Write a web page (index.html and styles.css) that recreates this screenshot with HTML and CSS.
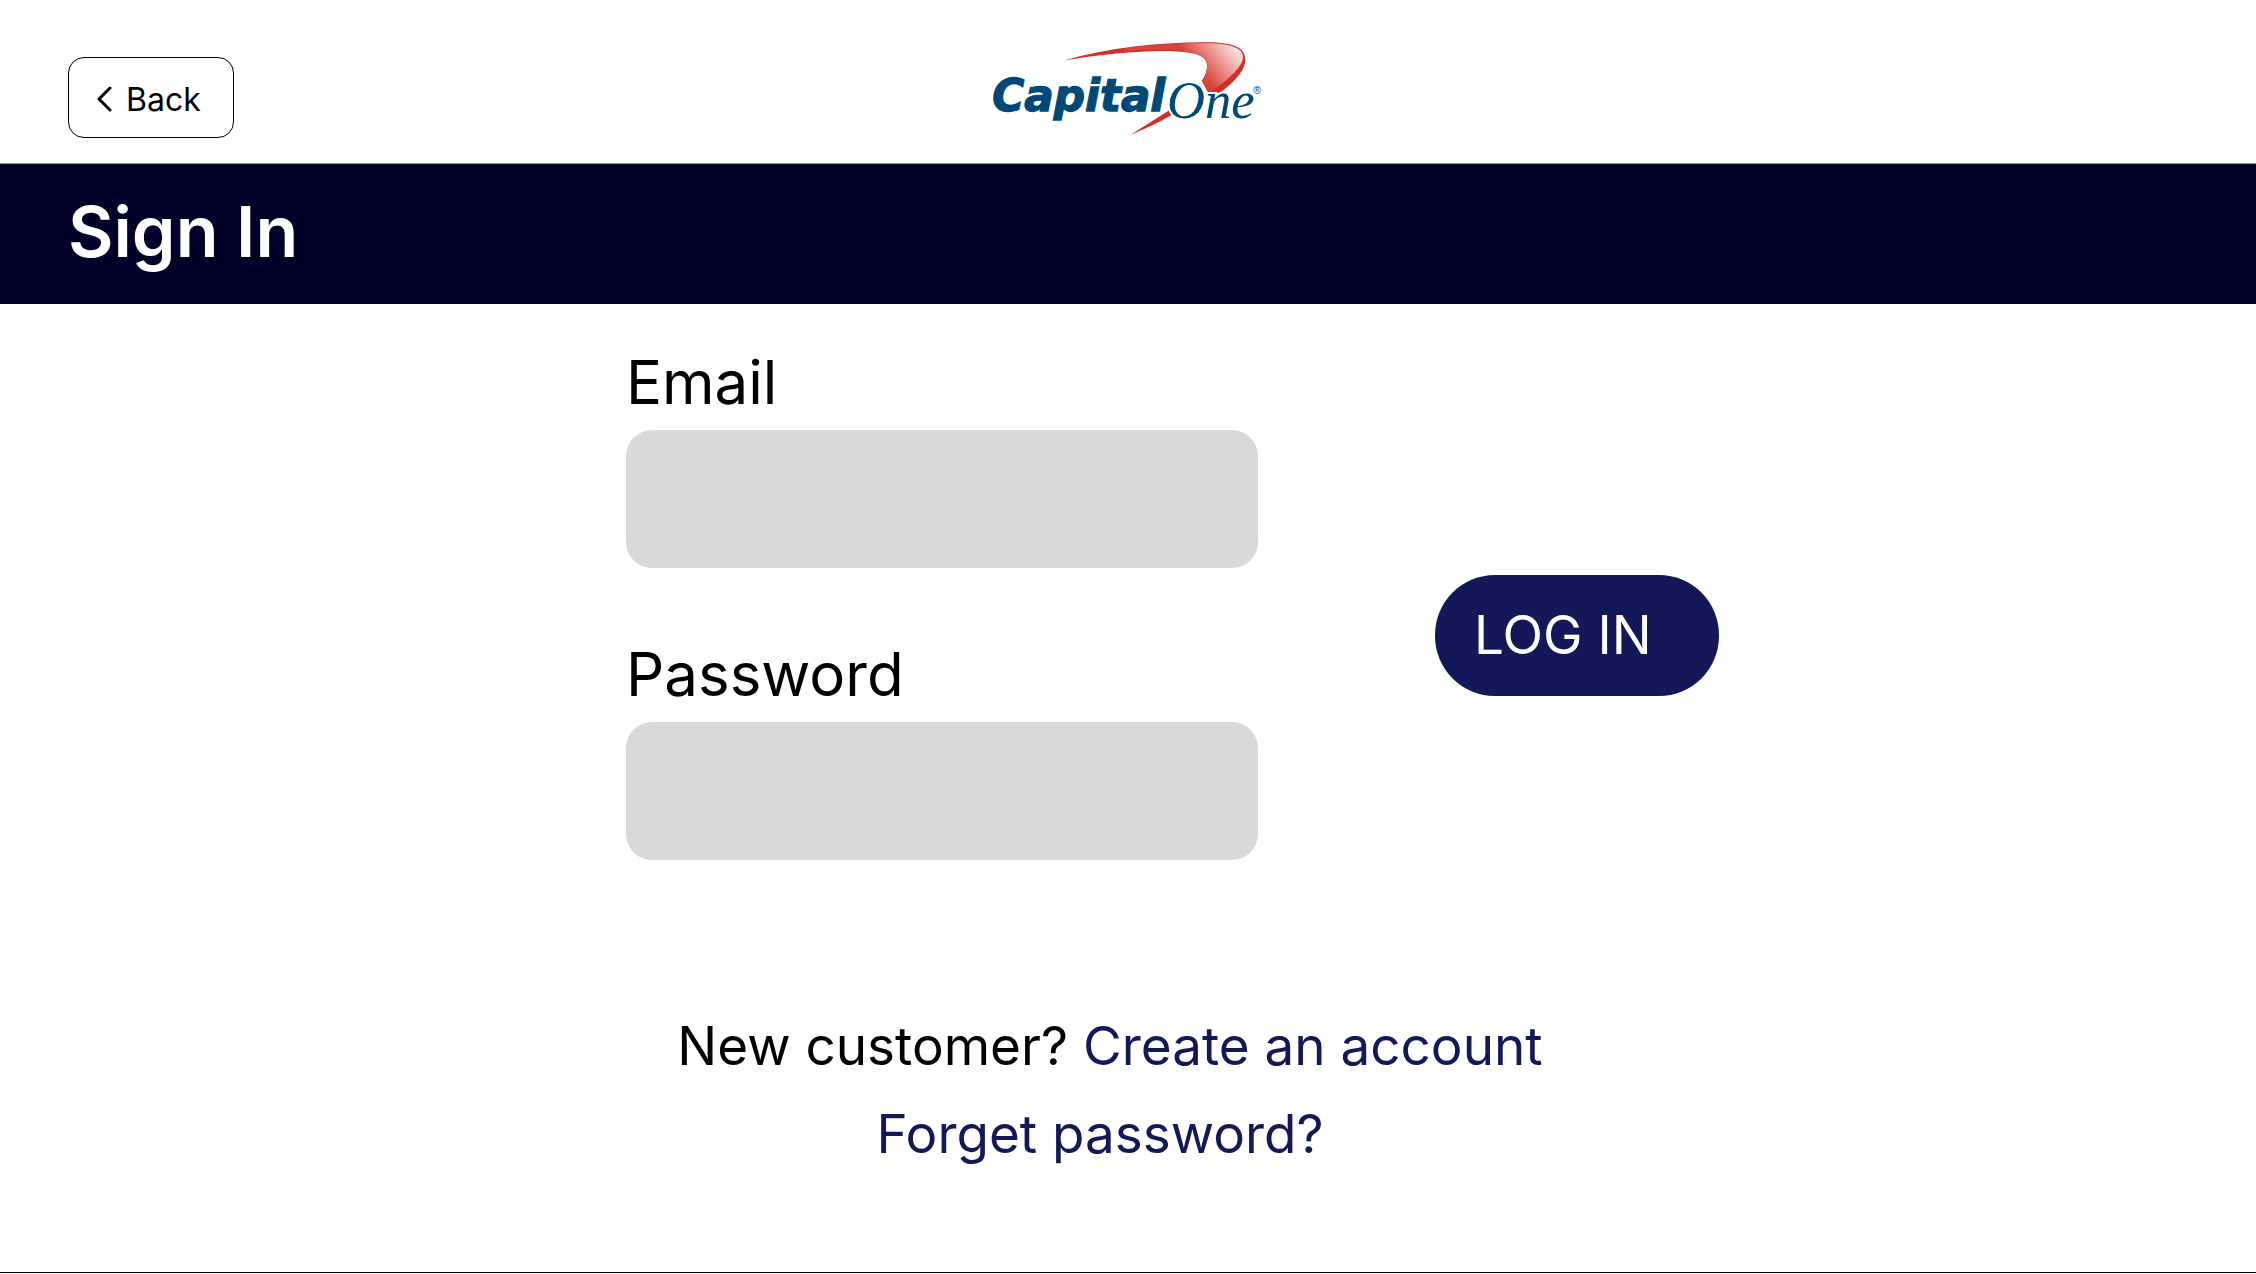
FILE: index.html
```html
<!DOCTYPE html>
<html lang="en">
<head>
<meta charset="utf-8">
<meta name="viewport" content="width=device-width, initial-scale=1">
<title>Sign In</title>
<link rel="stylesheet" href="styles.css">
</head>
<body>
<header class="topbar">
  <button class="back" type="button">
    <svg class="back-icon" viewBox="0 0 16 28" aria-hidden="true"><path d="M14 3 3 14l11 11"/></svg>
    Back
  </button>
  <svg class="logo" viewBox="38 33 810 285" role="img" aria-label="Capital One">
    <defs>
      <linearGradient id="swoosh" gradientUnits="userSpaceOnUse" x1="670" y1="140" x2="775" y2="55">
        <stop offset="0" stop-color="#d8433b"/>
        <stop offset="1" stop-color="#fbeae8"/>
      </linearGradient>
    </defs>
    <path class="logo-red" d="M249 92C380 54 540 36 680 37C762 38 797 54 795 92C792 130 748 168 708 196L684 188L664 152C682 130 685 100 672 86C640 50 440 60 249 92Z"/>
    <path fill="url(#swoosh)" d="M430 56C540 41 620 38 690 40C765 43 795 60 787 90C775 125 730 158 690 186L664 152C684 128 686 98 672 84C640 54 500 58 430 63Z"/>
    <path class="logo-red" d="M450 315L568 240L573 256C535 278 495 296 450 315Z"/>
    <text class="logo-capital" x="36" y="243">Capital</text>
    <text class="logo-one" x="560" y="265">One</text>
    <text class="logo-mark" x="819" y="193">®</text>
  </svg>
</header>
<div class="titlebar"><h1 class="title">Sign In</h1></div>
<main class="content">
  <form class="login">
    <div class="fields">
      <div class="field">
        <label class="label" for="email">Email</label>
        <input class="input" id="email" type="email">
      </div>
      <div class="field">
        <label class="label" for="password">Password</label>
        <input class="input" id="password" type="password">
      </div>
    </div>
    <button class="submit" type="submit">LOG IN</button>
  </form>
  <div class="links">
    <p class="line">New customer? <a class="link" href="#create">Create an account</a></p>
    <p class="line line-forgot"><a class="link" href="#forgot">Forget password?</a></p>
  </div>
</main>
<footer class="bottom"></footer>
</body>
</html>
```
FILE: styles.css
```css
* { box-sizing: border-box; }

body {
  margin: 0;
  min-height: 100vh;
  display: flex;
  flex-direction: column;
  background: #fff;
  color: #000;
  font-family: Inter, "Liberation Sans", sans-serif;
}

.topbar {
  display: grid;
  grid-template-columns: 1fr 270px 1fr;
  align-items: start;
  padding: 41px 68px 25px;
  border-bottom: 1px solid #999;
}

.back {
  display: flex;
  align-items: center;
  gap: 14px;
  width: 166px;
  height: 81px;
  margin-top: 16px;
  padding: 3px 0 0 27px;
  border: 1px solid #000;
  border-radius: 16px;
  background: #fff;
  color: #000;
  font-family: inherit;
  font-size: 32px;
}

.back-icon {
  width: 16px;
  height: 28px;
  fill: none;
  stroke: #000;
  stroke-width: 3;
  stroke-linecap: round;
  stroke-linejoin: round;
}

.logo { width: 270px; height: 95px; overflow: visible; }
.logo-red { fill: #d03027; }
.logo-capital {
  fill: #004977;
  stroke: #004977;
  stroke-width: 4px;
  font: italic 700 131px "DejaVu Sans", sans-serif;
}
.logo-one {
  fill: #004977;
  stroke: #fff;
  stroke-width: 12px;
  paint-order: stroke;
  font: italic 400 158px "Liberation Serif", serif;
}
.logo-mark {
  fill: #004977;
  font: 400 32px "Liberation Sans", sans-serif;
}

.titlebar {
  padding: 25px 68px 30px;
  background: #000028;
}

.title {
  margin: 0;
  color: #fff;
  font-size: 70px;
  font-weight: 600;
  line-height: 85px;
}

.content { flex: 1; padding-top: 42px; }

.login {
  display: grid;
  grid-template-columns: 632px 284px;
  column-gap: 177px;
  justify-content: center;
  align-items: center;
  padding-left: 89px;
}

.fields { display: grid; gap: 70px; }
.field { display: grid; gap: 12px; }

.label {
  font-size: 60px;
  line-height: 72px;
}

.input {
  width: 100%;
  height: 138px;
  padding: 0 32px;
  border: 0;
  border-radius: 26px;
  background: #d9d9d9;
  font: inherit;
  font-size: 60px;
}

.submit {
  height: 121px;
  margin-top: 64px;
  padding: 0 39px;
  border: 0;
  border-radius: 60px;
  background: #121858;
  color: #fff;
  font-family: inherit;
  font-size: 53px;
  text-align: left;
}

.links {
  padding: 142px 36px 0 0;
  text-align: center;
}

.line {
  margin: 0;
  font-size: 53px;
  line-height: 88px;
}

.line-forgot { padding-right: 20px; }

.link {
  color: #121858;
  text-decoration: none;
}

.bottom {
  height: 2px;
  border-top: 1px solid #000;
}
```
